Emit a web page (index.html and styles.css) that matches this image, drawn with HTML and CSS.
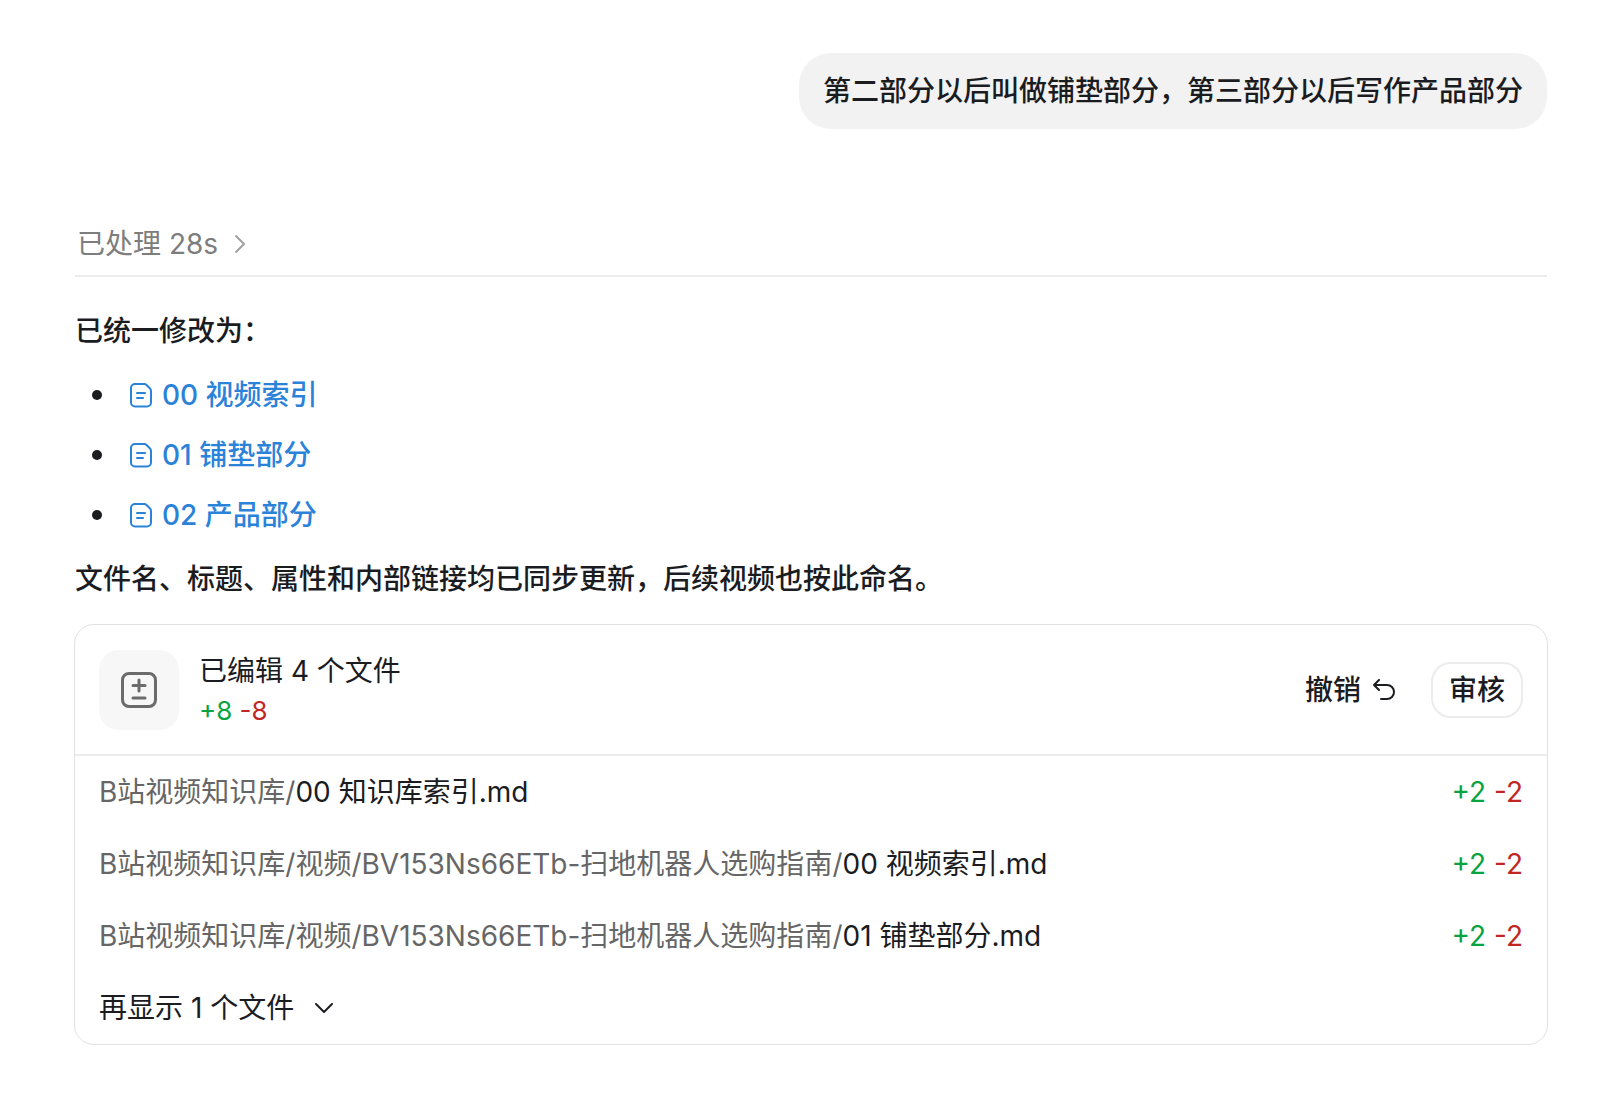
FILE: index.html
```html
<!DOCTYPE html>
<html lang="zh-CN">
<head>
<meta charset="utf-8">
<title>铺垫部分与产品部分</title>
<link rel="stylesheet" href="styles.css">
</head>
<body>
<main class="thread">
  <div class="bubble">第二部分以后叫做铺垫部分，第三部分以后写作产品部分</div>

  <button type="button" class="status">
    <span>已处理 28s</span>
    <svg class="chevron-right" viewBox="0 0 12 20"><path d="M2 2l8 8-8 8"/></svg>
  </button>

  <div class="answer">
    <p>已统一修改为：</p>
    <ul class="docs">
      <li><a href="#"><svg class="doc-icon" viewBox="0 0 22 26"><path d="M5 2h9.500q1 0 2 1l3.500 3.500q1 1 1 2.500v11.500a4 4 0 0 1-4 4H5a4 4 0 0 1-4-4V6a4 4 0 0 1 4-4z"/><path d="M7 11h8M7 16h6"/></svg>00 视频索引</a></li>
      <li><a href="#"><svg class="doc-icon" viewBox="0 0 22 26"><path d="M5 2h9.500q1 0 2 1l3.500 3.500q1 1 1 2.500v11.500a4 4 0 0 1-4 4H5a4 4 0 0 1-4-4V6a4 4 0 0 1 4-4z"/><path d="M7 11h8M7 16h6"/></svg>01 铺垫部分</a></li>
      <li><a href="#"><svg class="doc-icon" viewBox="0 0 22 26"><path d="M5 2h9.500q1 0 2 1l3.500 3.500q1 1 1 2.500v11.500a4 4 0 0 1-4 4H5a4 4 0 0 1-4-4V6a4 4 0 0 1 4-4z"/><path d="M7 11h8M7 16h6"/></svg>02 产品部分</a></li>
    </ul>
    <p>文件名、标题、属性和内部链接均已同步更新，后续视频也按此命名。</p>
  </div>

  <section class="card">
    <header class="card-head">
      <div class="badge">
        <svg viewBox="0 0 36 36"><rect x="1.500" y="1.500" width="33" height="33" rx="6.500"/><path d="M18 8v11M12 13.500h12M12 26h12"/></svg>
      </div>
      <div class="summary">
        <div class="title">已编辑 4 个文件</div>
        <div class="diff small"><span class="add">+8</span> <span class="del">-8</span></div>
      </div>
      <button type="button" class="undo">撤销
        <svg viewBox="0 0 22 22"><path d="M6 1L1 6l5 5M1 6h13a7 7 0 0 1 0 14H8"/></svg>
      </button>
      <button type="button" class="review">审核</button>
    </header>
    <ul class="files">
      <li><a href="#"><span class="dir">B站视频知识库/</span>00 知识库索引.md</a><span class="diff"><span class="add">+2</span> <span class="del">-2</span></span></li>
      <li><a href="#"><span class="dir">B站视频知识库/视频/BV153Ns66ETb-扫地机器人选购指南/</span>00 视频索引.md</a><span class="diff"><span class="add">+2</span> <span class="del">-2</span></span></li>
      <li><a href="#"><span class="dir">B站视频知识库/视频/BV153Ns66ETb-扫地机器人选购指南/</span>01 铺垫部分.md</a><span class="diff"><span class="add">+2</span> <span class="del">-2</span></span></li>
    </ul>
    <button type="button" class="more">
      <span>再显示 1 个文件</span>
      <svg viewBox="0 0 20 12"><path d="M2 2l8 8 8-8"/></svg>
    </button>
  </section>
</main>
</body>
</html>
```
FILE: styles.css
```css
* {box-sizing:border-box;}
body {margin:0; background:#fff; color:#1a1c1f; font-family:Inter,"Noto Sans CJK SC",sans-serif; font-size:28px; line-height:44px;}
button {font:inherit; color:inherit; background:none; border:0; padding:0; cursor:pointer;}
a {color:inherit; text-decoration:none;}
ul {list-style:none; margin:0; padding:0;}
p {margin:0;}
svg {display:block; flex:none; fill:none; stroke:currentColor; stroke-width:2; stroke-linecap:round; stroke-linejoin:round;}

.thread {display:flex; flex-direction:column; padding:53px 68px 60px 74px;}
.bubble {align-self:flex-end; margin-right:1px; padding:16px 24px; border-radius:32px; background:#f2f2f2; font-weight:500;}

.status {display:flex; align-items:center; gap:16px; margin:93px 1px 0; padding:0 2px 9px; border-bottom:2px solid #ececec; color:#7d7d7d;}
.chevron-right {width:12px; height:20px; color:#a0a0a0;}

.answer {padding:32px 0 23px 1px; font-weight:500;}
.docs {display:flex; flex-direction:column; gap:16px; margin:20px 0;}
.docs li {display:flex; align-items:center;}
.docs li::before {content:""; width:10px; height:10px; margin:0 28px 0 17px; border-radius:50%; background:#1a1c1f;}
.docs a {display:flex; align-items:center; gap:10px; color:#2b82d9;}
.doc-icon {width:22px; height:26px;}

.card {border:1px solid #e2e2e2; border-radius:20px;}
.card-head {display:flex; align-items:center; padding:25px 24px 24px; border-bottom:2px solid #ececec;}
.badge {display:flex; align-items:center; justify-content:center; width:80px; height:80px; border-radius:20px; background:#f7f7f7; color:#6b6b6b;}
.badge svg {width:36px; height:36px; stroke-width:3;}
.summary {flex:1; margin-left:20px;}
.title {line-height:42px;}
.diff {white-space:nowrap;}
.small {font-size:26px; line-height:38px;}
.add {color:#0aa33f;}
.del {color:#c02622;}
.undo {display:flex; align-items:center; gap:12px; margin-right:36px; font-weight:500;}
.undo svg {width:22px; height:22px;}
.review {padding:4px 16px; border:2px solid #ececec; border-radius:20px; font-weight:500;}

.files li {display:flex; justify-content:space-between; gap:24px; padding:14px 24px;}
.dir {color:#666;}
.more {display:flex; align-items:center; gap:20px; width:100%; padding:14px 24px;}
.more svg {width:20px; height:12px;}
```
